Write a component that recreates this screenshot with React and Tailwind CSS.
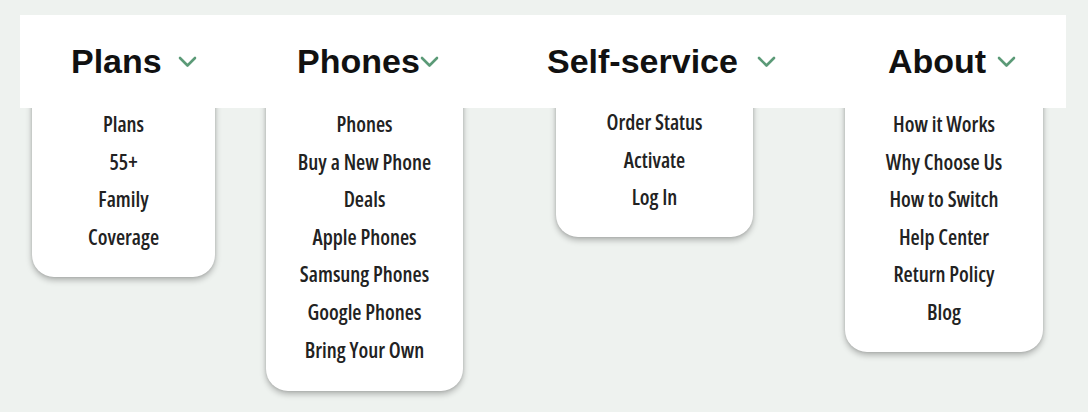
import React from "react";

const Chevron = () => (
  <svg width="19" height="12" viewBox="0 0 19 12" className="shrink-0">
    <polyline points="2,2 9.5,9.5 17,2" fill="none" stroke="#5b9a77" strokeWidth="2.6" strokeLinecap="round" strokeLinejoin="round" />
  </svg>
);

const headFont = { fontFamily: '"Liberation Sans", Arial, sans-serif' };
const itemFont = { fontFamily: '"Open Sans", "DejaVu Sans Condensed", sans-serif' };

function Dropdown({ items, className }) {
  return (
    <div
      className={`bg-white rounded-b-[22px] shadow-[0_3px_6px_rgba(0,0,0,0.28),0_0_3px_rgba(0,0,0,0.12)] flex flex-col items-center text-[21px] leading-[37.6px] font-semibold font-stretch-[75%] text-[#222] ${className}`}
      style={itemFont}
    >
      {items.map((t) => (
        <div key={t} className="whitespace-nowrap">{t}</div>
      ))}
    </div>
  );
}

export default function App() {
  return (
    <div className="w-[1088px] h-[412px] bg-[#eef2ef] overflow-hidden pt-[15px]">
      <div
        className="relative z-10 ml-[20px] w-[1046px] h-[93px] bg-white flex items-center text-[34px] font-bold text-[#111]"
        style={headFont}
      >
        <div className="ml-[51px] w-[226px] flex items-center gap-[16px]">
          <span>Plans</span>
          <Chevron />
        </div>
        <div className="w-[250px] flex items-center gap-0">
          <span>Phones</span>
          <Chevron />
        </div>
        <div className="w-[341px] flex items-center gap-[19px]">
          <span>Self-service</span>
          <Chevron />
        </div>
        <div className="flex items-center gap-[11px]">
          <span>About</span>
          <Chevron />
        </div>
      </div>
      <div className="flex items-start -mt-[20px] pl-[32px]">
        <Dropdown className="w-[183px] pt-[18px] pb-[21px]" items={["Plans", "55+", "Family", "Coverage"]} />
        <Dropdown
          className="ml-[51px] w-[197px] pt-[18px] pb-[22px]"
          items={["Phones", "Buy a New Phone", "Deals", "Apple Phones", "Samsung Phones", "Google Phones", "Bring Your Own"]}
        />
        <Dropdown className="ml-[93px] w-[197px] pt-[16px] pb-[20px]" items={["Order Status", "Activate", "Log In"]} />
        <Dropdown
          className="ml-[92px] w-[198px] pt-[18px] pb-[20px]"
          items={["How it Works", "Why Choose Us", "How to Switch", "Help Center", "Return Policy", "Blog"]}
        />
      </div>
    </div>
  );
}
